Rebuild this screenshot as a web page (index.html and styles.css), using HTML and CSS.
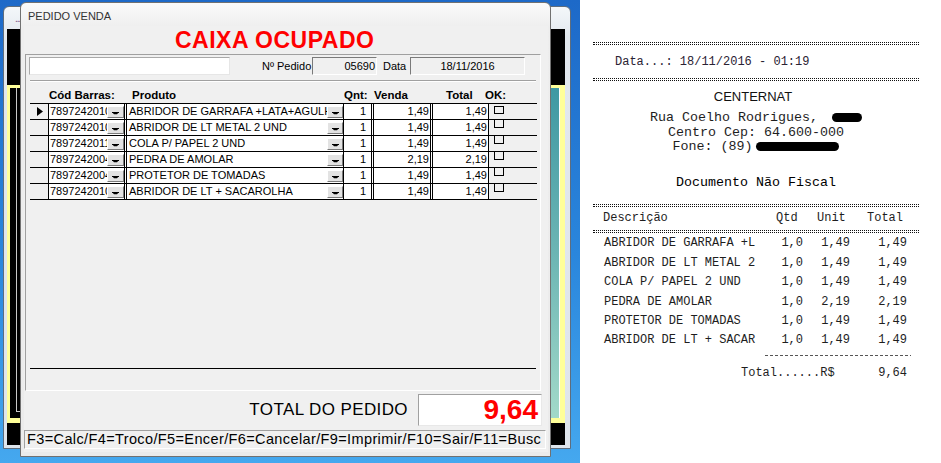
FILE: index.html
```html
<!DOCTYPE html>
<html lang="pt">
<head>
<meta charset="utf-8">
<title>Pedido Venda</title>
<link rel="stylesheet" href="styles.css">
</head>
<body>
<div class="screen">
  <div class="desktop">
    <div class="bgwin">
      <div class="bgwin-title"><span class="bg-dots">...</span></div>
      <div class="bgwin-body">
        <div class="ybox">
          <div class="ybox-left"><div class="ybox-line"></div></div>
          <div class="ybox-right"></div>
        </div>
      </div>
    </div>

    <div class="win">
      <div class="win-title">PEDIDO VENDA</div>
      <div class="client">
        <div class="caixa">CAIXA OCUPADO</div>
        <div class="panel">
          <div class="toprow">
            <div class="inp"></div>
            <span class="lbl lbl-ped">Nº Pedido</span>
            <div class="box box-ped">05690</div>
            <span class="lbl lbl-data">Data</span>
            <div class="box box-data">18/11/2016</div>
          </div>
          <div class="etch"></div>
          <div class="hdr">
            <span class="h-cod">Cód Barras:</span>
            <span class="h-prod">Produto</span>
            <span class="h-qnt">Qnt:</span>
            <span class="h-venda">Venda</span>
            <span class="h-total">Total</span>
            <span class="h-ok">OK:</span>
          </div>
          <div class="grid">
            <div class="row">
              <div class="ind"><svg class="arrow" width="6" height="9" viewBox="0 0 6 9"><path d="M0 0L6 4.5L0 9Z" fill="#000"/></svg></div>
              <div class="fcod"><span class="txt">7897242010</span><div class="btn"><svg width="7" height="3" viewBox="0 0 7 3"><path d="M0 0H7L5 2.2H2Z" fill="#000"/><rect x="0" y="0" width="7" height="1" fill="#000"/></svg></div></div>
              <div class="gap"></div>
              <div class="fprod"><span class="txt">ABRIDOR DE GARRAFA +LATA+AGULH</span><div class="btn"><svg width="7" height="3" viewBox="0 0 7 3"><path d="M0 0H7L5 2.2H2Z" fill="#000"/><rect x="0" y="0" width="7" height="1" fill="#000"/></svg></div></div>
              <div class="fqnt">1</div>
              <div class="gap"></div>
              <div class="fvenda">1,49</div>
              <div class="gap"></div>
              <div class="ftot">1,49</div>
              <div class="ok"><div class="cb cb-full"></div></div>
            </div>
            <div class="row">
              <div class="ind"></div>
              <div class="fcod"><span class="txt">7897242010</span><div class="btn"><svg width="7" height="3" viewBox="0 0 7 3"><path d="M0 0H7L5 2.2H2Z" fill="#000"/><rect x="0" y="0" width="7" height="1" fill="#000"/></svg></div></div>
              <div class="gap"></div>
              <div class="fprod"><span class="txt">ABRIDOR DE LT METAL 2 UND</span><div class="btn"><svg width="7" height="3" viewBox="0 0 7 3"><path d="M0 0H7L5 2.2H2Z" fill="#000"/><rect x="0" y="0" width="7" height="1" fill="#000"/></svg></div></div>
              <div class="fqnt">1</div>
              <div class="gap"></div>
              <div class="fvenda">1,49</div>
              <div class="gap"></div>
              <div class="ftot">1,49</div>
              <div class="ok"><div class="cb"></div></div>
            </div>
            <div class="row">
              <div class="ind"></div>
              <div class="fcod"><span class="txt">7897242011</span><div class="btn"><svg width="7" height="3" viewBox="0 0 7 3"><path d="M0 0H7L5 2.2H2Z" fill="#000"/><rect x="0" y="0" width="7" height="1" fill="#000"/></svg></div></div>
              <div class="gap"></div>
              <div class="fprod"><span class="txt">COLA P/ PAPEL 2 UND</span><div class="btn"><svg width="7" height="3" viewBox="0 0 7 3"><path d="M0 0H7L5 2.2H2Z" fill="#000"/><rect x="0" y="0" width="7" height="1" fill="#000"/></svg></div></div>
              <div class="fqnt">1</div>
              <div class="gap"></div>
              <div class="fvenda">1,49</div>
              <div class="gap"></div>
              <div class="ftot">1,49</div>
              <div class="ok"><div class="cb"></div></div>
            </div>
            <div class="row">
              <div class="ind"></div>
              <div class="fcod"><span class="txt">7897242004</span><div class="btn"><svg width="7" height="3" viewBox="0 0 7 3"><path d="M0 0H7L5 2.2H2Z" fill="#000"/><rect x="0" y="0" width="7" height="1" fill="#000"/></svg></div></div>
              <div class="gap"></div>
              <div class="fprod"><span class="txt">PEDRA DE AMOLAR</span><div class="btn"><svg width="7" height="3" viewBox="0 0 7 3"><path d="M0 0H7L5 2.2H2Z" fill="#000"/><rect x="0" y="0" width="7" height="1" fill="#000"/></svg></div></div>
              <div class="fqnt">1</div>
              <div class="gap"></div>
              <div class="fvenda">2,19</div>
              <div class="gap"></div>
              <div class="ftot">2,19</div>
              <div class="ok"><div class="cb"></div></div>
            </div>
            <div class="row">
              <div class="ind"></div>
              <div class="fcod"><span class="txt">7897242004</span><div class="btn"><svg width="7" height="3" viewBox="0 0 7 3"><path d="M0 0H7L5 2.2H2Z" fill="#000"/><rect x="0" y="0" width="7" height="1" fill="#000"/></svg></div></div>
              <div class="gap"></div>
              <div class="fprod"><span class="txt">PROTETOR DE TOMADAS</span><div class="btn"><svg width="7" height="3" viewBox="0 0 7 3"><path d="M0 0H7L5 2.2H2Z" fill="#000"/><rect x="0" y="0" width="7" height="1" fill="#000"/></svg></div></div>
              <div class="fqnt">1</div>
              <div class="gap"></div>
              <div class="fvenda">1,49</div>
              <div class="gap"></div>
              <div class="ftot">1,49</div>
              <div class="ok"><div class="cb"></div></div>
            </div>
            <div class="row">
              <div class="ind"></div>
              <div class="fcod"><span class="txt">7897242010</span><div class="btn"><svg width="7" height="3" viewBox="0 0 7 3"><path d="M0 0H7L5 2.2H2Z" fill="#000"/><rect x="0" y="0" width="7" height="1" fill="#000"/></svg></div></div>
              <div class="gap"></div>
              <div class="fprod"><span class="txt">ABRIDOR DE LT + SACAROLHA</span><div class="btn"><svg width="7" height="3" viewBox="0 0 7 3"><path d="M0 0H7L5 2.2H2Z" fill="#000"/><rect x="0" y="0" width="7" height="1" fill="#000"/></svg></div></div>
              <div class="fqnt">1</div>
              <div class="gap"></div>
              <div class="fvenda">1,49</div>
              <div class="gap"></div>
              <div class="ftot">1,49</div>
              <div class="ok"><div class="cb"></div></div>
            </div>
          </div>
          <div class="endline"></div>
        </div>
        <div class="totrow">
          <span class="totlbl">TOTAL DO PEDIDO</span>
          <div class="totbox">9,64</div>
        </div>
        <div class="status">F3=Calc/F4=Troco/F5=Encer/F6=Cancelar/F9=Imprimir/F10=Sair/F11=Busc</div>
      </div>
    </div>
  </div>

  <div class="receipt">
    <div class="dl"></div>
    <div class="rdata">Data...: 18/11/2016 - 01:19</div>
    <div class="dl dl2"></div>
    <div class="cname">CENTERNAT</div>
    <div class="addr">
      <div>Rua Coelho Rodrigues,<span class="blob blob-s"></span></div>
      <div>Centro Cep: 64.600-000</div>
      <div>Fone: (89)<span class="blob blob-l"></span></div>
    </div>
    <div class="docnf">Documento Não Fiscal</div>
    <div class="dl dl3"></div>
    <div class="ihdr">
      <span class="ih-desc">Descrição</span>
      <span class="ih-qtd">Qtd</span>
      <span class="ih-unit">Unit</span>
      <span class="ih-tot">Total</span>
    </div>
    <div class="dl dl4"></div>
    <div class="items">
      <div class="item"><span class="i-desc">ABRIDOR DE GARRAFA +L</span><span class="i-qtd">1,0</span><span class="i-unit">1,49</span><span class="i-tot">1,49</span></div>
      <div class="item"><span class="i-desc">ABRIDOR DE LT METAL 2</span><span class="i-qtd">1,0</span><span class="i-unit">1,49</span><span class="i-tot">1,49</span></div>
      <div class="item"><span class="i-desc">COLA P/ PAPEL 2 UND</span><span class="i-qtd">1,0</span><span class="i-unit">1,49</span><span class="i-tot">1,49</span></div>
      <div class="item"><span class="i-desc">PEDRA DE AMOLAR</span><span class="i-qtd">1,0</span><span class="i-unit">2,19</span><span class="i-tot">2,19</span></div>
      <div class="item"><span class="i-desc">PROTETOR DE TOMADAS</span><span class="i-qtd">1,0</span><span class="i-unit">1,49</span><span class="i-tot">1,49</span></div>
      <div class="item"><span class="i-desc">ABRIDOR DE LT + SACAR</span><span class="i-qtd">1,0</span><span class="i-unit">1,49</span><span class="i-tot">1,49</span></div>
    </div>
    <div class="dash"></div>
    <div class="rtot"><span>Total......R$</span><span>9,64</span></div>
  </div>
</div>
</body>
</html>
```

FILE: styles.css
```css
* { box-sizing: border-box; margin: 0; padding: 0; }
html, body { width: 941px; height: 463px; overflow: hidden; }
body { font-family: "Liberation Sans", Arial, sans-serif; background: #fff; color: #000; }

.screen { display: flex; width: 941px; height: 463px; }

/* ---------- desktop ---------- */
.desktop {
  position: relative; flex: none; width: 580px; height: 463px;
  background: linear-gradient(180deg, #1d69c8 0%, #2a86dc 55%, #45a8ef 100%);
}

.bgwin {
  position: absolute; left: 3px; top: 6px; width: 568px; height: 443px;
  border: 1px solid #5f6d7c; border-radius: 6px 6px 0 0;
  background: linear-gradient(180deg, #f4f7fa 0, #e2e8ee 30px, #dfe5ec 100%);
  display: flex; flex-direction: column; padding: 0 5px 3px 3px;
}
.bgwin-title { flex: none; height: 22px; position: relative; }
.bg-dots { position: absolute; left: 8px; top: 6px; font-size: 10px; color: #7a4d86; letter-spacing: -1px; }
.bgwin-body { flex: 1; background: #000; padding-top: 56px; }
.ybox {
  height: 338px; display: flex;
  border: solid #ffff99; border-width: 3px 5px 5px 3px;
}
.ybox-left { flex: 1; background: #000; padding: 0 0 6px 6px; }
.ybox-line { height: 100%; border-left: 1px solid #c8c8c8; border-bottom: 1px solid #c8c8c8; }
.ybox-right {
  flex: none; width: 120px; border-right: 1px solid #fff;
  background: linear-gradient(180deg, #3f98a3 0%, #6cb5b4 50%, #a2d9c9 100%);
}

/* ---------- main window ---------- */
.win {
  position: absolute; left: 20px; top: 2px; width: 531px; height: 455px;
  border: 1px solid #717171; border-radius: 6px 6px 0 0;
  background: linear-gradient(180deg, #fafafa 0, #eeeeee 24px, #ebebeb 100%);
  padding: 0 2px 4px 3px; display: flex; flex-direction: column;
}
.win-title {
  flex: none; height: 23px; padding: 3px 0 0 4px;
  font-size: 11px; line-height: 20px; color: #333;
}
.client {
  flex: none; height: 426px; background: #f0f0f0;
  display: flex; flex-direction: column;
}
.caixa {
  flex: none; height: 28px; padding-left: 151px;
  font-size: 23px; font-weight: bold; line-height: 28px; letter-spacing: 0.5px; color: #ff0000;
}

.panel {
  flex: none; height: 337px; width: 516px; margin-left: 1px;
  border: 1px solid; border-color: #a0a0a0 #ffffff #ffffff #a0a0a0;
  display: flex; flex-direction: column;
}
.toprow { flex: none; height: 18px; margin-top: 2px; display: flex; align-items: center; font-size: 11px; }
.inp {
  width: 201px; height: 18px; margin-left: 3px; background: #fff;
  border: 1px solid; border-color: #a9a9a9 #e6e6e6 #e6e6e6 #a9a9a9;
}
.lbl { flex: none; line-height: 18px; }
.lbl-ped { margin-left: 32px; width: 50px; }
.lbl-data { margin-left: 6px; width: 27px; }
.box {
  flex: none; height: 18px; line-height: 16px; background: #f0f0f0;
  border: 1px solid; border-color: #7a7a7a #ffffff #ffffff #7a7a7a;
}
.box-ped { width: 65px; text-align: right; padding-right: 1px; }
.box-data { width: 115px; text-align: center; }

.etch { flex: none; margin: 5px 0 0 4px; width: 506px; height: 2px; border-top: 1px solid #a0a0a0; border-bottom: 1px solid #fff; }

.hdr {
  flex: none; height: 14px; margin-top: 6px; padding-left: 23px;
  display: flex; font-size: 11.5px; font-weight: bold; line-height: 14px;
}
.hdr span { flex: none; }
.h-cod { width: 83px; }
.h-prod { width: 212px; }
.h-qnt { width: 30px; }
.h-venda { width: 72px; }
.h-total { width: 39px; }

.grid { flex: none; margin: 1px 0 0 4px; width: 507px; border-top: 1px solid #000; }
.row { display: flex; height: 16px; border-bottom: 1px solid #000; font-size: 11px; line-height: 15px; }
.ind { flex: none; width: 18px; background: #f0f0f0; display: flex; align-items: center; }
.arrow { margin-left: 7px; }
.fcod, .fprod { flex: none; display: flex; background: #fff; border-left: 1px solid #000; border-right: 1px solid #000; }
.fcod { width: 77px; }
.fprod { width: 218px; }
.txt { flex: 1; overflow: hidden; white-space: nowrap; padding-left: 1px; }
.fprod .txt { padding-left: 2px; }
.btn {
  flex: none; width: 17px; height: 12px; margin-top: 2px;
  background: #e3e3e3; border: 1px solid; border-color: #ffffff #7a7a7a #7a7a7a #ffffff;
  display: flex; align-items: flex-end; justify-content: center; padding-bottom: 2px;
}
.fprod .btn { width: 16px; }
.btn svg { display: block; }
.gap { flex: none; width: 1px; background: #fff; }
.fqnt { flex: none; width: 28px; background: #fff; border-right: 1px solid #000; text-align: right; padding-right: 5px; }
.fvenda, .ftot { flex: none; background: #fff; border-left: 1px solid #000; border-right: 1px solid #000; text-align: right; padding-right: 1px; }
.fvenda { width: 58px; }
.ftot { width: 57px; }
.ok { flex: 1; background: #f0f0f0; }
.cb { width: 10px; height: 8px; margin-left: 5px; border: 1px solid #000; border-top: 0; }
.cb-full { border-top: 1px solid #000; margin-top: 2px; }

.endline { flex: none; margin: 168px 0 0 4px; width: 506px; height: 1px; background: #000; }

.totrow {
  flex: none; height: 32px; margin-top: 3px; padding-right: 6px;
  display: flex; justify-content: flex-end; align-items: center;
}
.totlbl { font-size: 17px; letter-spacing: 0.4px; margin-right: 10px; line-height: 20px; }
.totbox {
  width: 124px; height: 32px; background: #fff;
  border: 1px solid; border-color: #a0a0a0 #e8e8e8 #e8e8e8 #a0a0a0;
  text-align: right; padding-right: 3px;
  font-size: 28px; font-weight: bold; line-height: 30px; color: #ff0000;
}

.status {
  flex: none; height: 19px; margin-top: 4px; margin-right: 2px;
  border: 1px solid; border-color: #a0a0a0 #ffffff #ffffff #a0a0a0;
  padding-left: 2px; font-size: 14.5px; letter-spacing: 0.38px; line-height: 17px;
  white-space: nowrap; overflow: hidden;
}

/* ---------- receipt ---------- */
.receipt {
  flex: none; width: 361px; height: 463px; background: #fff;
  padding: 42px 22px 0 13px;
  font-family: "Liberation Mono", "Courier New", monospace; color: #1e1e1e;
}
.dl { height: 3px; border-top: 1px dotted #111; border-bottom: 1px dotted #111; }
.rdata { margin: 9px 0 0 22px; font-size: 12px; line-height: 16px; color: #2a2233; }
.dl2 { margin-top: 8px; }
.cname {
  margin-top: 8px; padding-right: 6px; text-align: center;
  font-family: "Liberation Sans", Arial, sans-serif; font-size: 13px; line-height: 16px; color: #111;
}
.addr { margin-top: 6px; text-align: center; font-size: 13.33px; line-height: 14.5px; }
.blob { display: inline-block; height: 9px; background: #000; border-radius: 5px; vertical-align: -1px; }
.blob-s { width: 30px; margin-left: 14px; }
.blob-l { width: 83px; margin-left: 4px; }
.docnf { margin-top: 20px; text-align: center; font-size: 13.33px; line-height: 16px; color: #000; }
.dl3 { margin-top: 13.5px; }
.ihdr { margin-top: 3px; display: flex; font-size: 12px; line-height: 16px; }
.ihdr span { flex: none; }
.ih-desc { width: 183px; padding-left: 10px; }
.ih-qtd { width: 41px; }
.ih-unit { width: 50px; }
.dl4 { margin-top: 4px; }
.items { margin-top: 1.3px; font-size: 12px; }
.item { display: flex; line-height: 19.4px; white-space: nowrap; }
.item span { flex: none; }
.i-desc { width: 188px; padding-left: 11px; }
.i-qtd { width: 22px; text-align: right; }
.i-unit { width: 47px; text-align: right; }
.i-tot { width: 57px; text-align: right; }
.dash {
  margin: 4px 0 0 172px; width: 146px; height: 1px;
  background: repeating-linear-gradient(90deg, #555 0 3px, transparent 3px 5px);
}
.rtot {
  margin-top: 9.3px; padding: 0 12px 0 148px;
  display: flex; justify-content: space-between; font-size: 12px; line-height: 16px;
}
```
